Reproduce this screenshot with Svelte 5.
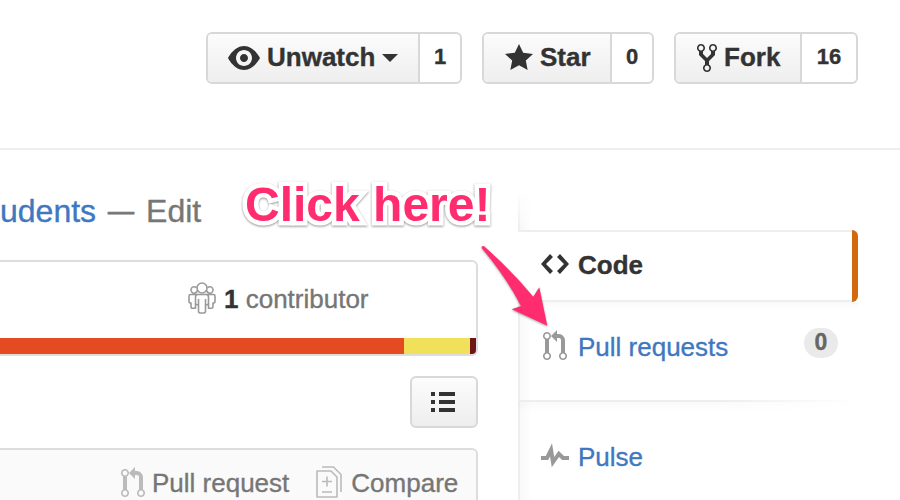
<script>
  const pullPath =
    'M11 11.28V5c-.03-.78-.34-1.47-.94-2.06C9.46 2.35 8.78 2.03 8 2H7V0L4 3l3 3V4h1c.27.02.48.11.69.31.21.2.3.42.31.69v6.28A1.993 1.993 0 0 0 10 15a1.993 1.993 0 0 0 1-3.72zm-1 2.92c-.66 0-1.2-.55-1.2-1.2 0-.65.55-1.2 1.2-1.2.65 0 1.2.55 1.2 1.2 0 .65-.55 1.2-1.2 1.2zM4 3c0-1.11-.89-2-2-2a1.993 1.993 0 0 0-1 3.72v6.56A1.993 1.993 0 0 0 2 15a1.993 1.993 0 0 0 1-3.72V4.72c.59-.34 1-.98 1-1.72zm-.8 10c0 .66-.55 1.2-1.2 1.2-.65 0-1.2-.55-1.2-1.2 0-.65.55-1.2 1.2-1.2.65 0 1.2.55 1.2 1.2zM2 4.2C1.34 4.2.8 3.65.8 3c0-.65.55-1.2 1.2-1.2.65 0 1.2.55 1.2 1.2 0 .65-.55 1.2-1.2 1.2z';
  const actions = [
    {
      id: 'watch', label: 'Unwatch', count: '1', w: 16,
      path: 'M8.06 2C3 2 0 8 0 8s3 6 8.06 6C13 14 16 8 16 8s-3-6-7.94-6zM8 12c-2.2 0-4-1.78-4-4 0-2.2 1.8-4 4-4 2.22 0 4 1.8 4 4 0 2.22-1.78 4-4 4zm2-4c0 1.11-.89 2-2 2s-2-.89-2-2 .89-2 2-2 2 .89 2 2z'
    },
    {
      id: 'star', label: 'Star', count: '0', w: 14,
      path: 'M14 6l-4.9-.64L7 1 4.9 5.36 0 6l3.6 3.26L2.67 14 7 11.67 11.33 14l-.93-4.74z'
    },
    {
      id: 'fork', label: 'Fork', count: '16', w: 10,
      path: 'M8 1a1.993 1.993 0 0 0-1 3.72V6L5 8 3 6V4.72A1.993 1.993 0 0 0 2 1a1.993 1.993 0 0 0-1 3.72V6.5l3 3v1.78A1.993 1.993 0 0 0 5 15a1.993 1.993 0 0 0 1-3.72V9.5l3-3V4.72A1.993 1.993 0 0 0 8 1zM2 4.2C1.34 4.2.8 3.65.8 3c0-.65.55-1.2 1.2-1.2.65 0 1.2.55 1.2 1.2 0 .65-.55 1.2-1.2 1.2zm3 10c-.66 0-1.2-.55-1.2-1.2 0-.65.55-1.2 1.2-1.2.65 0 1.2.55 1.2 1.2 0 .65-.55 1.2-1.2 1.2zm3-10c-.66 0-1.2-.55-1.2-1.2 0-.65.55-1.2 1.2-1.2.65 0 1.2.55 1.2 1.2 0 .65-.55 1.2-1.2 1.2z'
    }
  ];
</script>

{#snippet icon(path, w)}
  <svg width={w * 2} height="32" viewBox="0 0 {w} 16" fill="currentColor"><path d={path} /></svg>
{/snippet}

<div class="page">
  <header>
    {#each actions as a}
      <div class="group {a.id}">
        <button class="main">
          {@render icon(a.path, a.w)}
          <span>{a.label}</span>
          {#if a.id === 'watch'}<i class="caret"></i>{/if}
        </button>
        <a class="count" href="#{a.id}">{a.count}</a>
      </div>
    {/each}
  </header>

  <div class="body">
    <main>
      <div class="desc">
        <a href="#students">udents</a><span class="dash">—</span><span>Edit</span>
      </div>

      <section class="stats">
        <div class="contrib">
          <svg width="28" height="32" viewBox="0 0 28 32" fill="none" stroke="#999" stroke-width="1.6" stroke-linejoin="round">
            <circle cx="14" cy="6" r="5" />
            <path d="M9.300 8.500A3.200 3.200 0 1 1 8.500 5.800M18.700 8.500A3.200 3.200 0 1 0 19.500 5.800" />
            <path d="M9.500 12.500H2.500Q1 12.500 1 14V19.500Q1 21 3 21V24.500Q3 26.300 4.500 26.300H7.500V17M18.500 12.500H25.500Q27 12.500 27 14V19.500Q27 21 25 21V24.500Q25 26.300 23.500 26.300H20.500V17" />
            <path d="M10.500 17V29Q10.500 31 12 31H16Q17.500 31 17.500 29V17M7.500 17V15Q7.500 12.500 9.500 12.500H18.500Q20.500 12.500 20.500 15V17M7.500 21.500Q7.500 22.800 10.500 22.800M20.500 21.500Q20.500 22.800 17.500 22.800" />
          </svg>
          <span><b>1</b> contributor</span>
        </div>
        <div class="langs"><i class="html"></i><i class="js"></i><i class="css"></i></div>
      </section>

      <button class="list" aria-label="list">
        <svg width="24" height="20" viewBox="0 0 24 20" fill="#333">
          <path d="M0 0h4v4H0zM8 0h16v4H8zM0 8h4v4H0zM8 8h16v4H8zM0 16h4v4H0zM8 16h16v4H8z" />
        </svg>
      </button>

      <section class="compare">
        <span class="pale">{@render icon(pullPath, 12)}</span>
        <span class="pr">Pull request</span>
        <svg class="diff" width="26" height="32" viewBox="0 0 26 32" fill="none" stroke="#bbb" stroke-width="1.6" stroke-linejoin="round">
          <path d="M1 5h14l6 6v20H1z" />
          <path d="M6 1h11.500l7.500 7.500V26" />
          <path d="M11 10.500v10M6 15.500h10M6 26h10" />
        </svg>
        <span>Compare</span>
      </section>
    </main>

    <nav>
      <div class="edge"></div>
      <a class="item active" href="#code">
        {@render icon('M9.500 3L8 4.500 11.500 8 8 11.500 9.500 13 14 8 9.500 3zm-5 0L0 8l4.500 5L6 11.500 2.500 8 6 4.500 4.500 3z', 14)}
        <span>Code</span>
      </a>
      <a class="item pulls" href="#pulls">
        {@render icon(pullPath, 12)}
        <span>Pull requests</span>
        <b class="badge">0</b>
      </a>
      <div class="rule"></div>
      <a class="item pulse" href="#pulse">
        {@render icon('M11.500 8L8.800 5.400 6.600 8.500 5.500 1.600 2.380 8H0v2h3.600l.9-1.800.9 5.400L9 8.500l1.600 1.500H14V8h-2.500z', 14)}
        <span>Pulse</span>
      </a>
    </nav>
  </div>

  <div class="callout">Click here!</div>
  <svg class="arrow" width="80" height="96" viewBox="476 240 80 96">
    <path fill="#ff2d70" d="M482 246.500Q483.500 245.300 485.500 247.500Q512 271 533.300 296.700L539.300 287.300 547.300 325.700 511.700 309.300 521 306Q506 277 482 248.500Q481.300 247 482 246.500z" />
  </svg>
</div>

<style>
  :global(body) { margin: 0; background: #fff; }
  .page {
    position: relative;
    box-sizing: border-box;
    width: 900px;
    height: 500px;
    overflow: hidden;
    font: 26px/32px "Liberation Sans", Arial, sans-serif;
    color: #767676;
    background: #fff;
    -webkit-text-stroke: 0.35px currentColor;
  }
  a { text-decoration: none; color: #4078c0; -webkit-text-stroke-color: currentColor; }
  span { -webkit-text-stroke-color: currentColor; }
  svg { display: block; flex: none; }
  span { white-space: nowrap; }
  header {
    box-sizing: border-box;
    height: 150px;
    padding: 32px 42px 0 0;
    display: flex;
    justify-content: flex-end;
    gap: 20px;
    border-bottom: 2px solid #eee;
  }
  .group {
    display: flex;
    box-sizing: border-box;
    height: 52px;
    border: 2px solid #d8d8d8;
    border-radius: 6px;
    overflow: hidden;
  }
  button { font: inherit; margin: 0; }
  .main {
    display: flex;
    align-items: center;
    box-sizing: border-box;
    height: 48px;
    border: 0;
    border-right: 2px solid #d8d8d8;
    padding: 0 0 0 20px;
    background: linear-gradient(#fcfcfc, #eee);
    color: #333;
    font-weight: bold;
  }
  .main span { position: relative; top: -1px; }
  .watch { width: 256px; }
  .watch .main { width: 212px; }
  .watch .main span { margin-left: 7px; }
  .star { width: 172px; }
  .star .main { width: 128px; padding-left: 21px; }
  .star .main span { margin-left: 7px; }
  .fork { width: 184px; }
  .fork .main { width: 126px; padding-left: 21px; }
  .fork .main span { margin-left: 7px; }
  .caret {
    margin-left: 7px;
    border: 8px solid transparent;
    border-top-color: #333;
    border-bottom: 0;
  }
  .count {
    flex: 1;
    text-align: center;
    font-size: 22px;
    font-weight: bold;
    line-height: 45px;
    color: #333;
  }
  .body { display: flex; height: 350px; }
  main { width: 478px; display: flex; flex-direction: column; }
  .desc {
    display: flex;
    align-items: center;
    height: 40px;
    margin-top: 41px;
    font-size: 32px;
    line-height: 40px;
  }
  .dash { font-size: 26px; margin: 0 12px; -webkit-text-stroke-width: 0.8px; }
  .stats {
    box-sizing: border-box;
    height: 96px;
    margin-top: 29px;
    border: 2px solid #ddd;
    border-left: 0;
    border-radius: 0 6px 6px 0;
    overflow: hidden;
  }
  .contrib {
    display: flex;
    align-items: center;
    box-sizing: border-box;
    height: 76px;
    padding: 0 0 4px 188px;
  }
  .contrib span { margin-left: 8px; padding-top: 1px; }
  .contrib b { color: #333; -webkit-text-stroke-color: #333; }
  .langs { display: flex; height: 16px; }
  .html { width: 404px; background: #e44b23; }
  .js { width: 66px; background: #f1e05a; }
  .css { flex: 1; background: #701516; }
  .list {
    align-self: flex-end;
    display: flex;
    align-items: center;
    justify-content: center;
    box-sizing: border-box;
    width: 68px;
    height: 52px;
    padding: 0 2px 0 0;
    margin: 20px 0;
    border: 2px solid #d8d8d8;
    border-radius: 6px;
    background: linear-gradient(#fcfcfc, #eee);
  }
  .compare {
    box-sizing: border-box;
    flex: 1;
    display: flex;
    align-items: flex-start;
    padding: 17px 0 0 121px;
    border: 2px solid #ddd;
    border-width: 2px 2px 0 0;
    border-radius: 0 6px 0 0;
    background: #fafafa;
  }
  .pale { color: #bbb; }
  .pr { margin: 0 27px 0 7px; }
  .diff { margin-right: 9px; margin-top: -1px; }
  nav { width: 340px; margin-left: 40px; padding-top: 40px; box-sizing: border-box; }
  .edge {
    height: 40px;
    background: linear-gradient(#fff, rgba(255, 255, 255, 0)),
      linear-gradient(to right, #eee 2px, #f8f8f8 2px, #fff 14px);
  }
  .item {
    display: flex;
    align-items: flex-start;
    box-sizing: border-box;
    background: linear-gradient(to right, #eee 2px, #f9f9f9 2px, #fff 14px);
  }
  .item svg { color: #999; }
  .active {
    position: relative;
    height: 72px;
    padding: 17px 0 0 23px;
    border: 2px solid #eee;
    border-width: 2px 0;
    border-radius: 2px 6px 6px 2px;
    background: #fff;
    color: #333;
    font-weight: bold;
  }
  .active::after {
    content: "";
    position: absolute;
    top: -2px;
    right: 0;
    width: 6px;
    height: 72px;
    border-radius: 0 6px 6px 0;
    background: #d26911;
  }
  .active svg { color: #333; margin-top: -1px; }
  .active span { margin-left: 9px; }
  .pulls {
    height: 98px;
    padding: 28px 20px 0 25px;
    background: linear-gradient(rgba(0, 0, 0, .025), transparent 8px),
      linear-gradient(to right, #eee 2px, #f9f9f9 2px, #fff 14px);
  }
  .pulls span { margin-left: 11px; margin-top: 1px; }
  .badge {
    margin-left: auto;
    margin-top: -2px;
    width: 34px;
    height: 30px;
    border-radius: 15px;
    background: #eaeaea;
    color: #666;
    -webkit-text-stroke-color: #666;
    font-size: 23px;
    line-height: 29px;
    text-align: center;
  }
  .rule { height: 2px; background: linear-gradient(to right, #eee 60%, #fff); }
  .pulse {
    height: 100px;
    padding: 38px 0 0 23px;
    background: linear-gradient(to right, transparent 60%, #fff) 2px 0 / 338px 10px no-repeat,
      linear-gradient(rgba(0, 0, 0, .02), transparent 10px),
      linear-gradient(to right, #eee 2px, #f9f9f9 2px, #fff 14px);
  }
  .pulse span { margin-left: 9px; margin-top: 1px; }
  .callout {
    position: absolute;
    left: 245px;
    top: 177px;
    font-size: 48px;
    line-height: 56px;
    font-weight: bold;
    color: #ff2d70;
    white-space: nowrap;
    -webkit-text-stroke: 9px #fff;
    paint-order: stroke fill;
    stroke-linejoin: round;
    filter: drop-shadow(0 1px 1.2px rgba(0, 0, 0, .42));
  }
  .arrow {
    position: absolute;
    left: 476px;
    top: 240px;
    filter: drop-shadow(0 1px 1px rgba(0, 0, 0, .35));
  }
</style>
